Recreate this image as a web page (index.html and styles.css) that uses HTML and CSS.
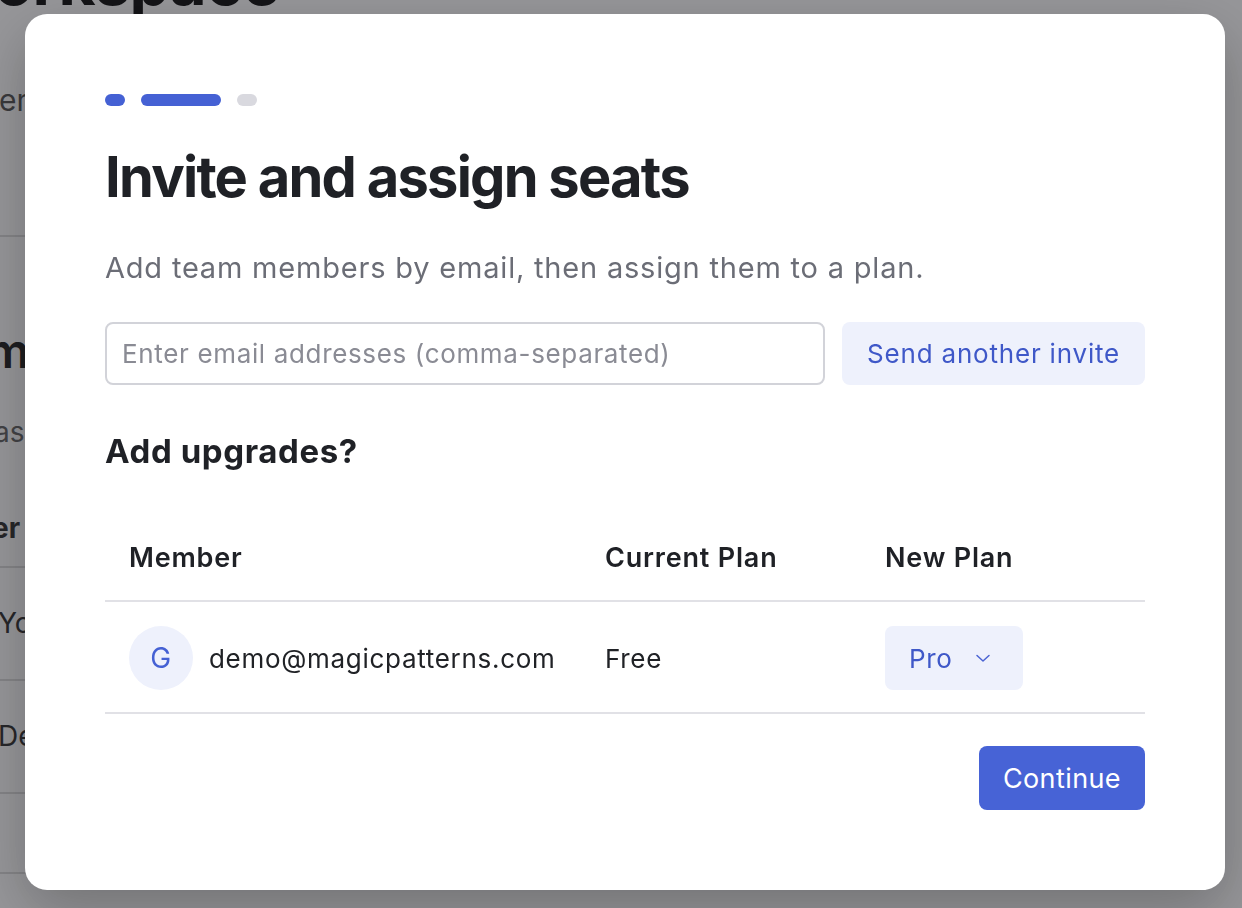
FILE: index.html
```html
<!DOCTYPE html>
<html lang="en">
<head>
    <meta charset="UTF-8">
    <title>Workspace - Invite and assign seats</title>
    <link rel="stylesheet" href="styles.css">
</head>
<body>
    <div class="page">
        <h1 class="page-title">Workspace</h1>
        <p class="page-sub">Members</p>
        <hr class="page-rule">
        <h2 class="page-section">Team</h2>
        <p class="page-note">as a</p>
        <div class="page-table">
            <div class="page-row page-head">Member</div>
            <div class="page-row">You</div>
            <div class="page-row">Dev</div>
            <div class="page-row page-last"></div>
        </div>
    </div>

    <div class="overlay">
        <div class="modal">
            <div class="steps">
                <span class="step done"></span>
                <span class="step current"></span>
                <span class="step"></span>
            </div>

            <h1 class="title">Invite and assign seats</h1>
            <p class="subtitle">Add team members by email, then assign them to a plan.</p>

            <div class="invite-row">
                <input type="text" class="email-input" placeholder="Enter email addresses (comma-separated)">
                <button type="button" class="btn-soft">Send another invite</button>
            </div>

            <h2 class="section-title">Add upgrades?</h2>

            <table class="seats">
                <thead>
                    <tr>
                        <th class="col-member">Member</th>
                        <th class="col-current">Current Plan</th>
                        <th>New Plan</th>
                    </tr>
                </thead>
                <tbody>
                    <tr>
                        <td>
                            <div class="member">
                                <span class="avatar">G</span>
                                <span>demo@magicpatterns.com</span>
                            </div>
                        </td>
                        <td>Free</td>
                        <td>
                            <button type="button" class="plan-select">
                                Pro
                                <svg width="16" height="10" viewBox="0 0 16 10" fill="none">
                                    <path d="M2 2.5 L8 8 L14 2.5" stroke="#4a63d3" stroke-width="1.5" stroke-linecap="round" stroke-linejoin="round"/>
                                </svg>
                            </button>
                        </td>
                    </tr>
                </tbody>
            </table>

            <div class="actions">
                <button type="button" class="btn-primary">Continue</button>
            </div>
        </div>
    </div>
</body>
</html>
```

FILE: styles.css
```css
body { margin: 0; font-family: Inter, "Liberation Sans", sans-serif; background: #fff; color: #1f2126; overflow: hidden; height: 908px; }

/* page behind the dialog, only its left edge shows */
.page { margin: -58px 0 0 -46px; width: 360px; overflow: hidden; white-space: nowrap; }
.page-title { font-size: 64px; font-weight: 700; margin: 0 0 0 -22px; line-height: 80px; letter-spacing: -1px; color: #111; }
.page-sub { font-size: 30px; color: #555; margin: 60px 0 0 18px; }
.page-rule { border: none; border-top: 2px solid #ddd; margin: 117px 0 0 0; }
.page-section { font-size: 48px; font-weight: 600; margin: 84px 0 0 -52px; color: #222; }
.page-note { font-size: 28px; color: #666; margin: 35px 0 0 40px; }
.page-table { margin-top: 31px; }
.page-row { height: 111px; border-bottom: 2px solid #ddd; font-size: 28px; line-height: 111px; padding-left: 44px; color: #333; }
.page-head { height: 86px; line-height: 96px; font-weight: 700; padding-left: 0; text-indent: -48px; }
.page-last { height: 78px; }

.overlay {
    position: fixed;
    inset: 0;
    background: rgba(24, 24, 30, 0.45);
    display: flex;
    justify-content: center;
    padding-top: 14px;
    box-sizing: border-box;
    padding-left: 8px;
}
.modal {
    width: 1200px;
    height: 876px;
    box-sizing: border-box;
    background: #fff;
    border-radius: 22px;
    padding: 80px;
    box-shadow: 0 20px 60px rgba(0, 0, 0, 0.25);
    display: flex;
    flex-direction: column;
}

.steps { display: flex; gap: 16px; }
.step { width: 20px; height: 12px; border-radius: 6px; background: #d9d9df; }
.step.done { background: #4561d4; }
.step.current { width: 80px; background: #4561d4; }

.title { font-size: 56px; font-weight: 700; letter-spacing: -1.75px; margin: 37px 0 0 0; line-height: 68px; color: #1f2126; }
.subtitle { font-size: 29px; color: #6b6d76; margin: 39px 0 0 0; line-height: 36px; letter-spacing: 0.8px; }

.invite-row { display: flex; gap: 17px; margin-top: 36px; }
.email-input {
    flex: 1;
    height: 63px;
    box-sizing: border-box;
    border: 2px solid #d2d3d9;
    border-radius: 8px;
    padding: 0 15px;
    font-family: inherit;
    font-size: 26px;
    letter-spacing: 0.65px;
    color: #1f2126;
    outline: none;
}
.email-input::placeholder { color: #8a8b94; }
.btn-soft {
    height: 63px;
    padding: 0 25px;
    border: none;
    border-radius: 8px;
    background: #eef1fc;
    color: #3f58c8;
    font-family: inherit;
    font-size: 26px;
    letter-spacing: 0.8px;
    cursor: pointer;
}

.section-title { font-size: 33px; font-weight: 700; margin: 46px 0 0 0; line-height: 40px; letter-spacing: 0.6px; color: #1f2126; }

.seats { width: 100%; border-collapse: collapse; margin-top: 69px; font-size: 26px; letter-spacing: 0.7px; }
.seats th { text-align: left; font-size: 27px; letter-spacing: 0.8px; font-weight: 600; padding: 0 0 24px 0; border-bottom: 2px solid #e1e1e6; line-height: 36px; }
.seats th:first-child, .seats td:first-child { padding-left: 24px; }
.col-member { width: 476px; }
.col-current { width: 280px; }
.seats td { padding: 24px 0 22px 0; border-bottom: 2px solid #e1e1e6; color: #202226; }

.member { display: flex; align-items: center; gap: 16px; }
.avatar {
    width: 64px;
    height: 64px;
    border-radius: 50%;
    background: #eef1fc;
    color: #4561d4;
    display: flex;
    align-items: center;
    justify-content: center;
    font-size: 28px;
}
.plan-select {
    height: 64px;
    width: 138px;
    border: none;
    border-radius: 8px;
    background: #eef1fc;
    color: #3f58c8;
    font-family: inherit;
    font-size: 26px;
    letter-spacing: 0.7px;
    display: flex;
    align-items: center;
    gap: 22px;
    padding: 0 24px;
    cursor: pointer;
}

.actions { display: flex; justify-content: flex-end; margin-top: 32px; }
.btn-primary {
    height: 64px;
    padding: 0 24px;
    border: none;
    border-radius: 8px;
    background: #4763d6;
    color: #fff;
    font-family: inherit;
    font-size: 27px;
    letter-spacing: 0.4px;
    cursor: pointer;
}
```
